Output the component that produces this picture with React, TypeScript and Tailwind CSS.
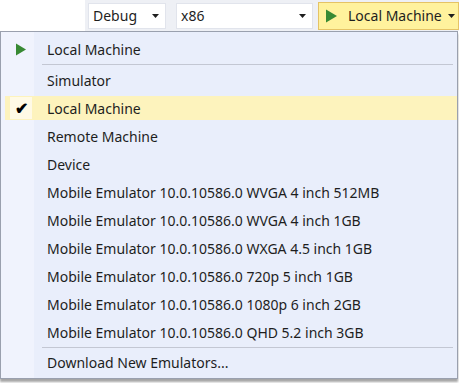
import { ReactNode } from "react";

const emulators = [
  "Mobile Emulator 10.0.10586.0 WVGA 4 inch 512MB",
  "Mobile Emulator 10.0.10586.0 WVGA 4 inch 1GB",
  "Mobile Emulator 10.0.10586.0 WXGA 4.5 inch 1GB",
  "Mobile Emulator 10.0.10586.0 720p 5 inch 1GB",
  "Mobile Emulator 10.0.10586.0 1080p 6 inch 2GB",
  "Mobile Emulator 10.0.10586.0 QHD 5.2 inch 3GB",
];

function PlayIcon({ className }: { className?: string }) {
  return (
    <svg viewBox="0 0 10 12" className={className} aria-hidden="true">
      <polygon points="0,0 10,6 0,12" fill="#388a34" />
    </svg>
  );
}

function Caret() {
  return (
    <svg viewBox="0 0 7 4" className="h-[4px] w-[7px] shrink-0" aria-hidden="true">
      <polygon points="0,0 7,0 3.5,4" fill="#1e1e1e" />
    </svg>
  );
}

function MenuItem({
  children,
  icon,
  selected,
}: {
  children: ReactNode;
  icon?: ReactNode;
  selected?: boolean;
}) {
  return (
    <li className="flex h-[28px] items-center py-[2px] pl-[4px]">
      <div
        className={`flex h-full flex-1 items-center ${selected ? "bg-[#fdf3bd]" : ""}`}
      >
        <div className="flex w-[30px] items-center justify-center pl-[2px]">
          {selected ? (
            <div className="flex h-[22px] w-[22px] items-center justify-center bg-[#fffae6] text-[16px] font-bold leading-none text-black">
              ✔
            </div>
          ) : (
            icon
          )}
        </div>
        <span className="whitespace-nowrap pl-[12px]">{children}</span>
      </div>
    </li>
  );
}

function Separator({ className }: { className: string }) {
  return (
    <li className={`flex pl-[41px] pr-[4px] ${className}`}>
      <div className="h-px w-full bg-[#c3c7d3]" />
    </li>
  );
}

export default function App() {
  return (
    <div
      className="relative h-[383px] w-[459px] overflow-hidden bg-white text-[14px] text-[#1e1e1e]"
      style={{ fontFamily: '"Segoe UI", "Noto Sans", sans-serif' }}
    >
      <div className="ml-[85px] flex h-[31px] items-center gap-[10px] bg-[#eef0f5] pl-[3px]">
        <div className="flex h-[26px] w-[78px] items-center justify-between border border-[#e1e4ec] bg-white pl-[4px] pr-[6px]">
          <span>Debug</span>
          <Caret />
        </div>
        <div className="flex h-[26px] w-[137px] items-center justify-between border border-[#e1e4ec] bg-white pl-[4px] pr-[6px]">
          <span>x86</span>
          <Caret />
        </div>
        <div className="-ml-[5px] flex h-[28px] flex-1 items-center border border-[#e5c365] bg-[#fff29d] pl-[7px] pr-[3px]">
          <PlayIcon className="h-[14px] w-[11px] shrink-0" />
          <span className="ml-[11px] flex-1 whitespace-nowrap">Local Machine</span>
          <Caret />
        </div>
      </div>

      <div className="relative w-[458px] border border-[#9aa0ae] bg-[#e9eefb] shadow-[0_3px_2px_rgba(0,0,0,0.35)]">
        <div className="absolute inset-y-0 left-0 w-[33px] bg-[#f0f3fd]" />
        <ul className="relative pt-[3px] pb-[2px]">
          <MenuItem icon={<PlayIcon className="h-[13px] w-[10px]" />}>Local Machine</MenuItem>
          <Separator className="h-[3px] items-center" />
          <MenuItem>Simulator</MenuItem>
          <MenuItem selected>Local Machine</MenuItem>
          <MenuItem>Remote Machine</MenuItem>
          <MenuItem>Device</MenuItem>
          {emulators.map((name) => (
            <MenuItem key={name}>{name}</MenuItem>
          ))}
          <Separator className="h-[2px] items-end" />
          <MenuItem>Download New Emulators...</MenuItem>
        </ul>
      </div>
    </div>
  );
}
